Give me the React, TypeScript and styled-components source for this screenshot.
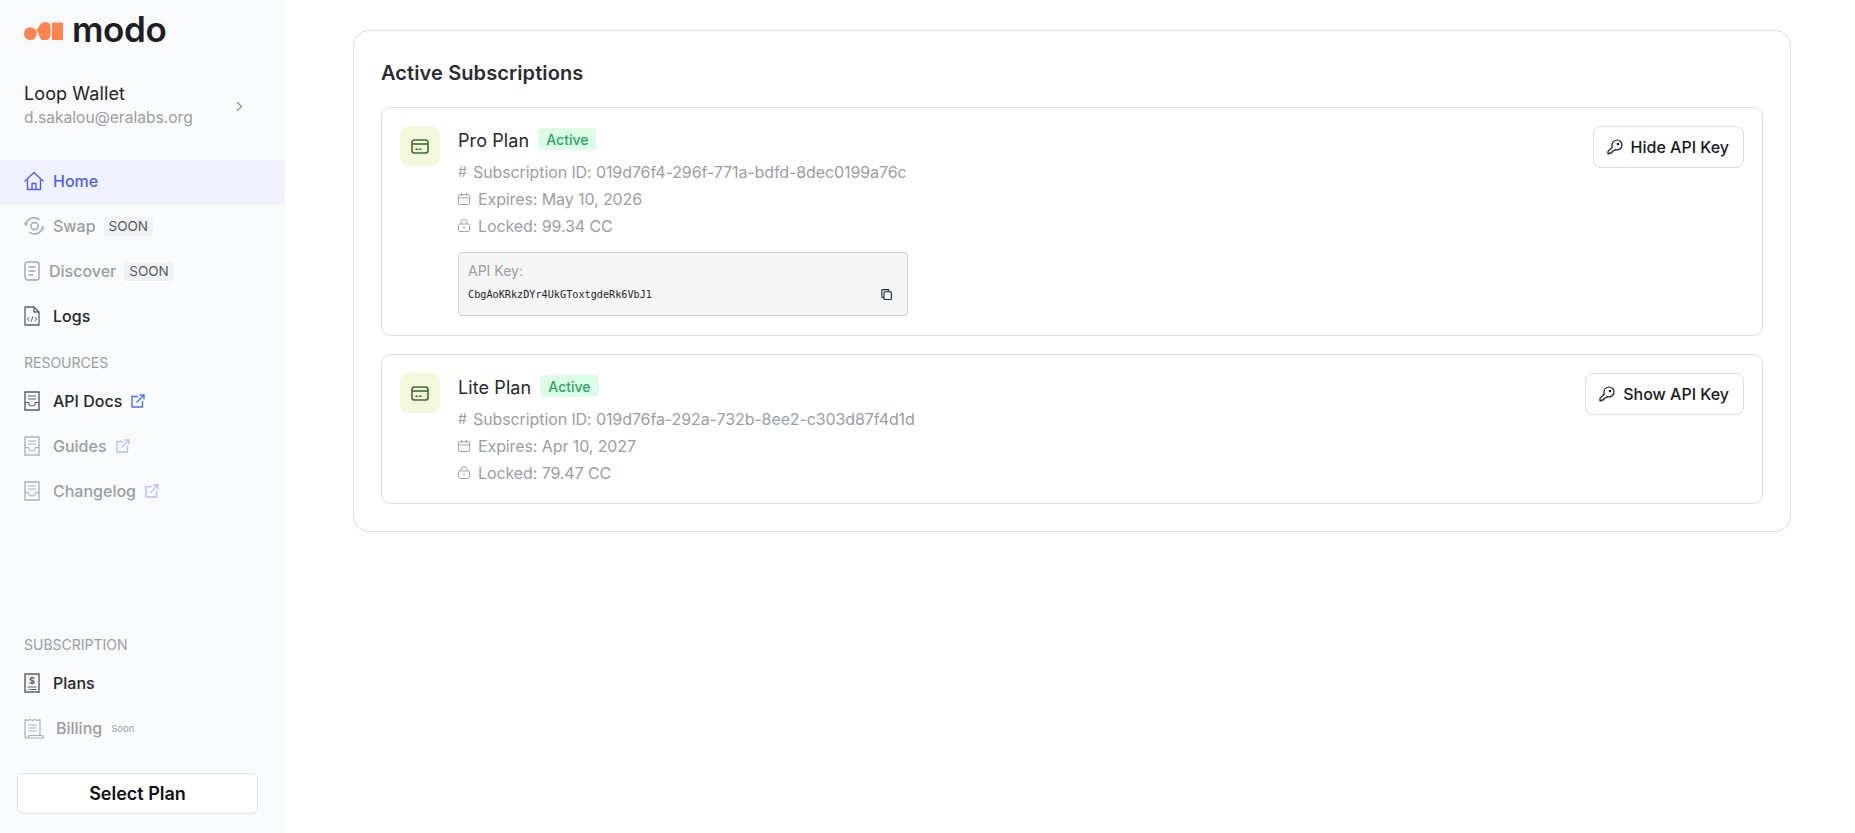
import React from "react";
import styled, { createGlobalStyle } from "styled-components";

const GlobalStyle = createGlobalStyle`
  html, body {
    margin: 0;
    background: #ffffff;
    color: #1f2329;
    font-family: Inter, "Liberation Sans", sans-serif;
  }
  * { box-sizing: border-box; }
`;

const Page = styled.div`
  display: flex;
  height: 833px;
  overflow: hidden;
`;

const Sidebar = styled.aside`
  width: 285px;
  flex: none;
  display: flex;
  flex-direction: column;
  background: #f9fafc;
  padding-top: 16px;
`;

const Logo = styled.div`
  display: flex;
  align-items: center;
  gap: 9px;
  height: 30px;
  padding-left: 24px;
`;

const LogoWord = styled.span`
  font-family: Inter, sans-serif;
  font-size: 35px;
  font-weight: 600;
  line-height: 30px;
  letter-spacing: -0.4px;
  color: #1c2024;
  position: relative;
  top: -2px;
`;

const Wallet = styled.div`
  display: flex;
  align-items: center;
  justify-content: space-between;
  padding: 6px 42px 0 24px;
  height: 114px;
`;

const WalletText = styled.div`
  display: flex;
  flex-direction: column;
  gap: 3px;
  margin-top: -1px;
`;

const WalletName = styled.div`
  font-size: 18px;
  line-height: 22px;
  font-weight: 400;
  letter-spacing: 0.1px;
  color: #1f2329;
`;

const WalletMail = styled.div`
  font-size: 15.6px;
  line-height: 20px;
  color: #9b9ea3;
`;

const NavRow = styled.div<{ $active?: boolean; $muted?: boolean; $gap?: number }>`
  display: flex;
  align-items: center;
  height: 45px;
  padding: 0 0 3px 24px;
  gap: ${(p) => p.$gap ?? 9}px;
  font-size: 16px;
  font-weight: 450;
  background: ${(p) => (p.$active ? "#eff1fe" : "transparent")};
  color: ${(p) => (p.$active ? "#4f5ff0" : p.$muted ? "#9a9da3" : "#23262b")};
`;

const NavExternal = styled.span`
  display: inline-flex;
  margin-left: -4px;
`;

const SoonTag = styled.span`
  margin-left: -1px;
  padding: 0 5px;
  height: 19px;
  display: inline-flex;
  align-items: center;
  border-radius: 4px;
  background: #f0f1f4;
  color: #555a60;
  font-size: 13.5px;
  font-weight: 400;
`;

const SoonSmall = styled.span`
  margin-left: -3px;
  font-size: 9.5px;
  font-weight: 400;
  color: #9a9da3;
`;

const SectionLabel = styled.div<{ $top: number; $bottom: number }>`
  padding-left: 24px;
  margin-top: ${(p) => p.$top}px;
  margin-bottom: ${(p) => p.$bottom}px;
  font-size: 14px;
  line-height: 18px;
  font-weight: 400;
  color: #9a9da3;
`;

const Spacer = styled.div`
  flex: 1;
`;

const SelectPlan = styled.button`
  margin: 21px 27px 19px 17px;
  height: 41px;
  flex: none;
  border: 1px solid #dfe0e8;
  border-radius: 6px;
  background: #ffffff;
  color: #0f1115;
  font-family: inherit;
  font-size: 18px;
  font-weight: 600;
`;

const Main = styled.main`
  flex: 1;
  padding: 30px 64px 0 68px;
`;

const Panel = styled.section`
  border: 1px solid #dcdcdc;
  border-radius: 16px;
  padding: 27px;
  display: flex;
  flex-direction: column;
`;

const PanelTitle = styled.h2`
  margin: 0 0 19px;
  font-size: 20px;
  line-height: 30px;
  font-weight: 600;
  letter-spacing: 0.1px;
  color: #2a2c30;
`;

const PlanList = styled.div`
  display: flex;
  flex-direction: column;
  gap: 18px;
`;

const PlanCard = styled.article`
  display: flex;
  align-items: flex-start;
  border: 1px solid #dcdcdc;
  border-radius: 10px;
  padding: 18px 18px 17px 18px;
`;

const PlanIcon = styled.div`
  width: 40px;
  height: 40px;
  flex: none;
  display: flex;
  align-items: center;
  justify-content: center;
  border-radius: 8px;
  background: #f3f8dc;
  margin-right: 18px;
`;

const PlanBody = styled.div`
  flex: 1;
  display: flex;
  flex-direction: column;
`;

const PlanHead = styled.div`
  display: flex;
  align-items: center;
  gap: 9px;
  height: 26px;
  margin-top: 1px;
  margin-bottom: 5px;
`;

const PlanName = styled.div`
  font-size: 18px;
  font-weight: 400;
  letter-spacing: 0.1px;
  color: #26282c;
`;

const ActiveBadge = styled.span`
  display: inline-flex;
  align-items: center;
  height: 22px;
  padding: 0 8px;
  margin-top: -2px;
  border-radius: 4px;
  background: #dcfce7;
  color: #2ba563;
  font-size: 14px;
  font-weight: 450;
`;

const MetaRow = styled.div`
  display: flex;
  align-items: center;
  height: 27px;
  gap: 8px;
  font-size: 16px;
  letter-spacing: -0.1px;
  color: #9a9da3;
`;

const HashMark = styled.span`
  width: 7px;
  font-size: 14px;
`;

const KeyBox = styled.div`
  width: 450px;
  height: 64px;
  margin-top: 13px;
  margin-bottom: 2px;
  padding: 8px 9px 0;
  background: #f5f5f5;
  border: 1px solid #d2d2d2;
  border-radius: 4px;
`;

const KeyLabel = styled.div`
  font-size: 14px;
  line-height: 20px;
  color: #9a9da3;
`;

const KeyRow = styled.div`
  display: flex;
  align-items: center;
  justify-content: space-between;
  padding-right: 6px;
  margin-top: 8px;
`;

const KeyValue = styled.code`
  font-family: "DejaVu Sans Mono", "Liberation Mono", monospace;
  font-size: 10.2px;
  color: #1f2329;
`;

const KeyButton = styled.button`
  flex: none;
  display: inline-flex;
  align-items: center;
  gap: 8px;
  height: 42px;
  padding: 0 14px 0 13px;
  border: 1px solid #dcdcdc;
  border-radius: 8px;
  background: #ffffff;
  color: #16181d;
  font-family: inherit;
  font-size: 16px;
  font-weight: 450;
`;

const LogoMark = () => (
  <svg width="39" height="18" viewBox="0 0 39 18">
    <circle cx="6.4" cy="11.6" r="6.4" fill="#fb8451" />
    <path d="M12.2 8.5 L15.8 3.2 Q17.6 0 21 0 Q26.6 0 26.6 4.5 V12.2 A5.8 5.8 0 0 1 14.9 13.2 Q14.6 10.5 12.2 8.5Z" fill="#fb8451" />
    <rect x="28" y="0.6" width="11" height="17.4" fill="#fb8451" />
  </svg>
);

const HomeIcon = () => (
  <svg width="20" height="20" viewBox="0 0 20 20" fill="none" stroke="#4f5ff0" strokeWidth="1.4" strokeLinejoin="round">
    <path d="M1 10 L10 1.5 L19 10" strokeLinecap="round" />
    <path d="M3.5 8.5 V18.5 H16.5 V8.5" />
    <path d="M8 18.5 V12.5 H12 V18.5" />
  </svg>
);

const SwapIcon = () => (
  <svg width="20" height="20" viewBox="0 0 20 20" fill="none" stroke="#a2a5a9" strokeWidth="1.5" strokeLinecap="round">
    <circle cx="10.5" cy="10" r="3.6" />
    <path d="M2 9 A8 8 0 0 1 15 3.5" />
    <path d="M18.5 11 A8 8 0 0 1 6 16.5" />
    <path d="M2 9 L1 7" />
    <path d="M18.5 11 L19.5 13" />
  </svg>
);

const DiscoverIcon = () => (
  <svg width="16" height="20" viewBox="0 0 16 20" fill="none" stroke="#a2a5a9" strokeWidth="1.4" strokeLinecap="round">
    <rect x="1" y="1" width="14" height="18" rx="2.5" />
    <path d="M5 6 H11 M5 10 H11 M5 14 H8.5" />
  </svg>
);

const LogsIcon = () => (
  <svg width="16" height="20" viewBox="0 0 16 20" fill="none" stroke="#5c5f64" strokeWidth="1.3" strokeLinejoin="round">
    <path d="M1 1 H10 L15 6 V19 H1 Z" />
    <path d="M10 1 V6 H15" />
    <path d="M5.2 11 L3.4 13 L5.2 15 M10.8 11 L12.6 13 L10.8 15 M8.8 10.5 L7.2 15.5" strokeWidth="1" />
  </svg>
);

const DocIcon = ({ color }: { color: string }) => (
  <svg width="16" height="20" viewBox="0 0 16 20" fill="none" stroke={color} strokeWidth="1.4">
    <path d="M1 1 H15 V19 H1 Z" />
    <path d="M4 5 H12 M4 8 H12" strokeWidth="1.2" />
    <path d="M1 11.5 H4.5 Q5 15 8 15 Q11 15 11.5 11.5 H15" strokeWidth="1.2" />
  </svg>
);

const ExternalIcon = ({ color }: { color: string }) => (
  <NavExternal>
    <svg width="14" height="14" viewBox="0 0 14 14" fill="none" stroke={color} strokeWidth="1.4">
      <path d="M7 2.5 H1 V13 H11.5 V7" />
      <path d="M5.5 8.5 L13 1 M8.5 1 H13 V5.5" />
    </svg>
  </NavExternal>
);

const PlansIcon = () => (
  <svg width="16" height="20" viewBox="0 0 16 20" fill="none" stroke="#5c5f64" strokeWidth="1.4">
    <path d="M1 1 H15 V19 H1 Z" />
    <path d="M3.5 14 H12.5 M3.5 16.5 H4.5 M6 16.5 H12.5" strokeWidth="1.1" />
    <text x="8" y="11" textAnchor="middle" fontSize="9" fontWeight="700" fill="#5c5f64" stroke="none" fontFamily="Inter, sans-serif">$</text>
  </svg>
);

const BillingIcon = () => (
  <svg width="20" height="21" viewBox="0 0 20 21" fill="none" stroke="#a9acb0" strokeWidth="1.2" strokeLinejoin="round">
    <path d="M1 1.5 L3.5 2.5 L6 1.5 L8.5 2.5 L11 1.5 L13.5 2.5 L16 1.5 V17" />
    <path d="M1 1.5 V18 Q1 20 3 20 H19.5 Q19.5 17.5 17.5 17.5 H5 Q5 20 3 20" />
    <path d="M4.5 7 H12.5 M4.5 10 H12.5 M4.5 13 H12.5" />
  </svg>
);

const CardIcon = () => (
  <svg width="18" height="15" viewBox="0 0 18 15" fill="none" stroke="#3f6d30" strokeWidth="1.6">
    <rect x="1" y="1" width="16" height="13" rx="2.6" />
    <path d="M1 5 H17" />
    <path d="M5 10.2 H6.3 M8.6 10.2 H9.9" strokeLinecap="round" />
  </svg>
);

const CalendarIcon = () => (
  <svg width="12" height="12" viewBox="0 0 12 12" fill="none" stroke="#a2a5a9" strokeWidth="1">
    <rect x="0.5" y="1.5" width="11" height="10" rx="1.5" />
    <path d="M0.5 5 H11.5 M3.5 0 V3 M8.5 0 V3" />
  </svg>
);

const LockIcon = () => (
  <svg width="12" height="13" viewBox="0 0 12 13" fill="none" stroke="#a2a5a9" strokeWidth="1">
    <rect x="0.5" y="5" width="11" height="7.5" rx="1.3" />
    <path d="M3 5 V3.2 A3 2.7 0 0 1 9 3.2 V5" />
    <circle cx="6" cy="8.6" r="0.6" fill="#a2a5a9" />
  </svg>
);

const CopyIcon = () => (
  <svg width="11" height="11" viewBox="0 0 11 11" fill="none" stroke="#1f2329" strokeWidth="1.1">
    <rect x="3" y="2.8" width="7.4" height="7.7" rx="1" />
    <path d="M3 8.5 H1.8 Q0.8 8.5 0.8 7.5 V1.5 Q0.8 0.6 1.8 0.6 H7 Q8 0.6 8 2.5" />
  </svg>
);

const KeyIcon = () => (
  <svg width="16" height="16" viewBox="0 0 16 16" fill="none" stroke="#16181d" strokeWidth="1.2" strokeLinejoin="round">
    <path d="M10 1 A5 5 0 0 1 15 6 A5 5 0 0 1 8.2 10.6 L6.8 12 H5 V13.8 H3 L2 15 H1 V12.4 L5.4 8 A5 5 0 0 1 10 1 Z" />
    <circle cx="11" cy="5" r="0.7" fill="#16181d" />
  </svg>
);

const MutedExternal = "#b6bffa";

type Plan = {
  name: string;
  id: string;
  expires: string;
  locked: string;
  button: string;
  apiKey?: string;
};

const plans: Plan[] = [
  {
    name: "Pro Plan",
    id: "019d76f4-296f-771a-bdfd-8dec0199a76c",
    expires: "May 10, 2026",
    locked: "99.34 CC",
    button: "Hide API Key",
    apiKey: "CbgAoKRkzDYr4UkGToxtgdeRk6VbJ1",
  },
  {
    name: "Lite Plan",
    id: "019d76fa-292a-732b-8ee2-c303d87f4d1d",
    expires: "Apr 10, 2027",
    locked: "79.47 CC",
    button: "Show API Key",
  },
];

export default function App() {
  return (
    <>
      <GlobalStyle />
      <Page>
        <Sidebar>
          <Logo>
            <LogoMark />
            <LogoWord>modo</LogoWord>
          </Logo>
          <Wallet>
            <WalletText>
              <WalletName>Loop Wallet</WalletName>
              <WalletMail>d.sakalou@eralabs.org</WalletMail>
            </WalletText>
            <svg width="7" height="11" viewBox="0 0 7 11" fill="none" stroke="#8f9297" strokeWidth="1.3">
              <path d="M1 1 L5.5 5.5 L1 10" />
            </svg>
          </Wallet>
          <NavRow $active>
            <HomeIcon />
            Home
          </NavRow>
          <NavRow $muted>
            <SwapIcon />
            Swap <SoonTag>SOON</SoonTag>
          </NavRow>
          <NavRow $muted>
            <DiscoverIcon />
            Discover <SoonTag>SOON</SoonTag>
          </NavRow>
          <NavRow $gap={13}>
            <LogsIcon />
            Logs
          </NavRow>
          <SectionLabel $top={14} $bottom={8}>RESOURCES</SectionLabel>
          <NavRow $gap={13}>
            <DocIcon color="#5c5f64" />
            API Docs <ExternalIcon color="#4f6ff0" />
          </NavRow>
          <NavRow $muted $gap={13}>
            <DocIcon color="#b0b2b6" />
            Guides <ExternalIcon color={MutedExternal} />
          </NavRow>
          <NavRow $muted $gap={13}>
            <DocIcon color="#b0b2b6" />
            Changelog <ExternalIcon color={MutedExternal} />
          </NavRow>
          <Spacer />
          <SectionLabel $top={0} $bottom={8}>SUBSCRIPTION</SectionLabel>
          <NavRow $gap={13}>
            <PlansIcon />
            Plans
          </NavRow>
          <NavRow $muted $gap={12}>
            <BillingIcon />
            Billing <SoonSmall>Soon</SoonSmall>
          </NavRow>
          <SelectPlan type="button">Select Plan</SelectPlan>
        </Sidebar>
        <Main>
          <Panel>
            <PanelTitle>Active Subscriptions</PanelTitle>
            <PlanList>
              {plans.map((plan) => (
                <PlanCard key={plan.name}>
                  <PlanIcon>
                    <CardIcon />
                  </PlanIcon>
                  <PlanBody>
                    <PlanHead>
                      <PlanName>{plan.name}</PlanName>
                      <ActiveBadge>Active</ActiveBadge>
                    </PlanHead>
                    <MetaRow>
                      <HashMark>#</HashMark>
                      Subscription ID: {plan.id}
                    </MetaRow>
                    <MetaRow>
                      <CalendarIcon />
                      Expires: {plan.expires}
                    </MetaRow>
                    <MetaRow>
                      <LockIcon />
                      Locked: {plan.locked}
                    </MetaRow>
                    {plan.apiKey && (
                      <KeyBox>
                        <KeyLabel>API Key:</KeyLabel>
                        <KeyRow>
                          <KeyValue>{plan.apiKey}</KeyValue>
                          <CopyIcon />
                        </KeyRow>
                      </KeyBox>
                    )}
                  </PlanBody>
                  <KeyButton type="button">
                    <KeyIcon />
                    {plan.button}
                  </KeyButton>
                </PlanCard>
              ))}
            </PlanList>
          </Panel>
        </Main>
      </Page>
    </>
  );
}
